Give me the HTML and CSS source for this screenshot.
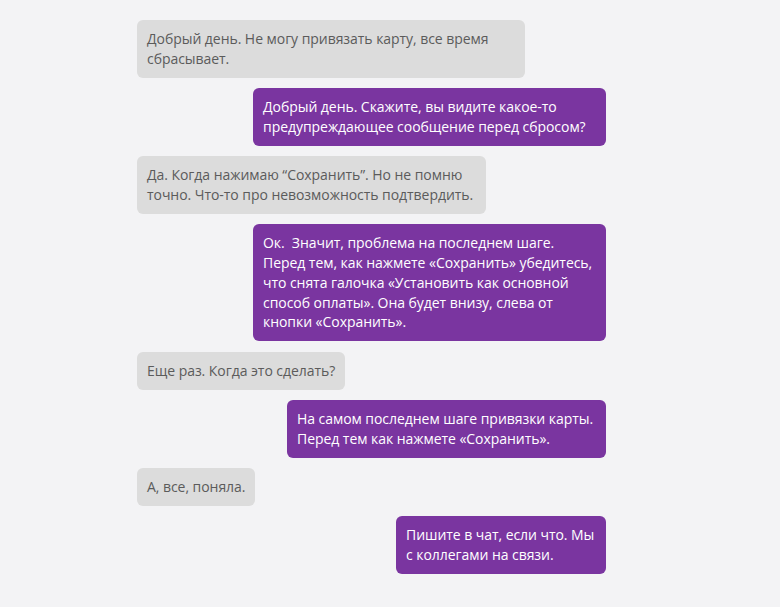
FILE: index.html
```html
<!DOCTYPE html>
<html lang="ru">
<head>
<meta charset="UTF-8">
<link rel="stylesheet" href="styles.css">
</head>
<body>
<div class="chat">
    <div class="msg in" style="--w: 388px">Добрый день. Не могу привязать карту, все время сбрасывает.</div>
    <div class="msg out" style="--w: 353px">Добрый день. Скажите, вы видите какое-то предупреждающее сообщение перед сбросом?</div>
    <div class="msg in" style="--w: 349px">Да. Когда нажимаю “Сохранить”. Но не помню точно. Что-то про невозможность подтвердить.</div>
    <div class="msg out" style="--w: 353px">Ок.&nbsp; Значит, проблема на последнем шаге. Перед тем, как нажмете «Сохранить» убедитесь, что снята галочка «Установить как основной способ оплаты». Она будет внизу, слева от кнопки «Сохранить».</div>
    <div class="msg in">Еще раз. Когда это сделать?</div>
    <div class="msg out" style="--w: 319px">На самом последнем шаге привязки карты. Перед тем как нажмете «Сохранить».</div>
    <div class="msg in">А, все, поняла.</div>
    <div class="msg out" style="--w: 210px">Пишите в чат, если что. Мы с коллегами на связи.</div>
</div>
</body>
</html>
```

FILE: styles.css
```css
html, body {
  margin: 0;
  background: #f3f3f5;
}

.chat {
  width: 469px;
  margin-left: 137px;
  padding-top: 20px;
  display: flex;
  flex-direction: column;
  gap: 10.5px;
  font-family: "Open Sans", "Noto Sans", sans-serif;
  font-size: 14px;
  line-height: 19.8px;
}

.msg {
  --w: 400px;
  max-width: var(--w);
  box-sizing: border-box;
  padding: 9px 10px;
  border-radius: 6px;
  letter-spacing: -0.05px;
}

.msg.in {
  align-self: flex-start;
  background: #dcdcdc;
  color: #5b5b5b;
}

.msg.out {
  align-self: flex-end;
  background: #7a35a0;
  color: #fff;
}
```
